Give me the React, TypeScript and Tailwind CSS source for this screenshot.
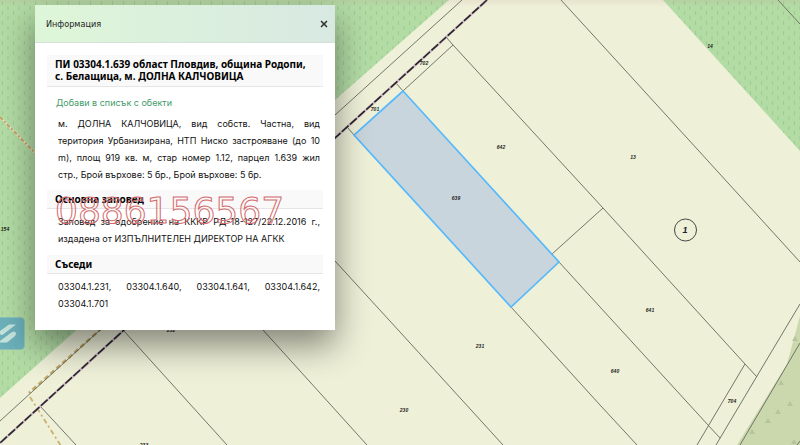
import React from "react";
import { X } from "lucide-react";

const labels = [
  { x: 710, y: 48, text: "14" },
  { x: 633, y: 159, text: "13" },
  { x: 424, y: 65, text: "702" },
  { x: 375, y: 111, text: "701" },
  { x: 501, y: 149, text: "642" },
  { x: 456, y: 200, text: "639" },
  { x: 650, y: 312, text: "641" },
  { x: 615, y: 373, text: "640" },
  { x: 480, y: 348, text: "231" },
  { x: 404, y: 412, text: "230" },
  { x: 732, y: 403, text: "704" },
  { x: 5, y: 231, text: "154" },
  { x: 171, y: 332, text: "232" },
  { x: 144, y: 447, text: "233" },
];

const trees = [
  [795, 339],
  [781, 383],
  [790, 404],
  [778, 412],
  [768, 421],
  [752, 432],
  [794, 442],
];

function CadastreMap() {
  return (
    <svg
      className="absolute inset-0 h-full w-full"
      viewBox="0 0 800 445"
      preserveAspectRatio="xMinYMin slice"
      aria-label="Кадастрална карта"
    >
      <defs>
        <pattern id="meadow" width="11" height="10" patternUnits="userSpaceOnUse">
          <rect width="11" height="10" fill="#b3dca5" />
          <path d="M2.5 1v4M8 6v4" stroke="#9fcb95" strokeWidth="1.1" />
        </pattern>
        <linearGradient id="topShade" x1="0" y1="0" x2="0" y2="1">
          <stop offset="0" stopColor="#c08080" stopOpacity="0.12" />
          <stop offset="1" stopColor="#c08080" stopOpacity="0" />
        </linearGradient>
      </defs>

      {/* land cover */}
      <rect width="800" height="445" fill="#eef0d8" />
      <path d="M0 0H449L335 100L0 398Z" fill="url(#meadow)" />
      <path d="M663 0H800V151Z" fill="url(#meadow)" />
      <path d="M800 316L787 364L737 445H800Z" fill="#cbd8ae" />
      {trees.map(([x, y]) => (
        <path key={x} d={`M${x - 3} ${y + 2}l3 -5l3 5z`} fill="#b5c59b" />
      ))}

      {/* paths */}
      <g fill="none">
        <path d="M0 117L36 154" stroke="#dde3c0" strokeWidth="2.5" />
        <path d="M0 117L36 154" stroke="#c5a058" strokeWidth="1.8" strokeDasharray="4 2 2 2" />
        <path d="M102 328L29 393" stroke="#c4aa68" strokeWidth="2.6" strokeDasharray="5 3" />
        <path d="M30 397L61 446" stroke="#ccb070" strokeWidth="1.8" strokeDasharray="5 3 2 3" />
      </g>

      {/* parcel borders */}
      <path
        d="M462 0L335 115L100 330L0 421M446 37L453 45L603 208L745 364L757 377M453 45L403 91L396 83M347 127L354 135M603 208L552 254M559 262L600 307L708 425L720 438M511 307L600 405L637 445M561 0L698 150L800 262M778 0L800 24M263 330L367 445M335 261L400 332L503 445M124 331L180 393L227 445M40 406L76 445M800 304L757 376L716 445M745 364L697 445M800 343L740 445M797 445L800 441"
        fill="none"
        stroke="#66695f"
        strokeWidth="0.9"
      />

      {/* settlement border */}
      <path d="M487 0L335 138L124 330L0 443" fill="none" stroke="#cdb9c4" strokeWidth="2.4" />
      <path
        d="M487 0L335 138L124 330L0 443"
        fill="none"
        stroke="#28242a"
        strokeWidth="1.6"
        strokeDasharray="9 2"
      />

      {/* selected parcel */}
      <path
        d="M403 91L559 262L511 307L354 135Z"
        fill="#c8d5dd"
        stroke="#58b9fa"
        strokeWidth="1.7"
      />

      <g
        fill="#222"
        fontFamily="'Liberation Sans', sans-serif"
        fontStyle="italic"
        fontWeight="700"
        fontSize="5"
        textAnchor="middle"
      >
        {labels.map((l) => (
          <text key={l.text} x={l.x} y={l.y}>
            {l.text}
          </text>
        ))}
      </g>
      <circle cx="685.5" cy="230" r="11" fill="none" stroke="#333" strokeWidth="0.9" />
      <text
        x="685"
        y="233"
        fill="#222"
        fontFamily="'Liberation Sans', sans-serif"
        fontStyle="italic"
        fontWeight="700"
        fontSize="9"
        textAnchor="middle"
      >
        1
      </text>

      {/* map provider badge */}
      <rect x="-9" y="317.5" width="33.5" height="32" rx="4" fill="#6cb0ba" stroke="#8cc4b5" />
      <path
        d="M0 331L9 324.500H16L3 334.500Q0 336 0 333ZM0 341L12 332Q15 330.500 16 333Q16.500 335 14 337L7 342.500H0Z"
        fill="#c5e3da"
      />
      <rect width="800" height="7" fill="url(#topShade)" />
    </svg>
  );
}

function SectionTitle({ children }: { children: React.ReactNode }) {
  return (
    <h3 className="border-b border-[#e6e6e6] bg-[#f9f9f9] px-2 py-[3px] font-['Noto_Sans',sans-serif] text-[10px] leading-3 font-bold text-black">
      {children}
    </h3>
  );
}

function InfoDialog() {
  return (
    <section
      aria-label="Информация"
      className="absolute top-[5px] left-[35px] w-[300px] bg-white font-[Inter,sans-serif] shadow-[0_15px_32px_rgba(0,0,0,0.45)]"
    >
      <header className="flex h-[38px] items-center justify-between border-b border-[#d5e0d8] bg-linear-to-r from-[#def6d8] to-[#d8e9e2] pr-[6px] pl-[11px]">
        <h2 className="font-['DejaVu_Sans_Condensed','DejaVu_Sans',sans-serif] text-[9px] leading-3 text-[#222]">
          Информация
        </h2>
        <button type="button" aria-label="Затвори" className="text-[#333]">
          <X size={10} strokeWidth={4} />
        </button>
      </header>

      <div className="px-3 pt-3 pb-[18px]">
        <h3 className="border-b border-[#e6e6e6] bg-[#f9f9f9] px-2 pt-[3px] pb-1 font-['Noto_Sans',sans-serif] text-[10px] leading-3 font-bold whitespace-nowrap text-black">
          ПИ 03304.1.639 област Пловдив, община Родопи,
          <br />
          с. Белащица, м. ДОЛНА КАЛЧОВИЦА
        </h3>
        <a href="#list" className="mt-2 block pl-[9px] text-[9px] leading-4 text-[#3f9a6a]">
          Добави в списък с обекти
        </a>
        <p className="mt-1 mb-[7px] pr-[3px] pl-[11px] text-justify text-[9px] leading-[17px] text-[#111]">
          м. ДОЛНА КАЛЧОВИЦА, вид собств. Частна, вид територия Урбанизирана, НТП Ниско
          застрояване (до 10 m), площ 919 кв. м, стар номер 1.12, парцел 1.639 жил{" "}
          <span className="whitespace-nowrap">стр., Брой</span> върхове: 5 бр., Брой върхове: 5 бр.
        </p>

        <SectionTitle>Основна заповед</SectionTitle>
        <p className="mt-1 mb-2 pr-[3px] pl-[11px] text-justify text-[9px] leading-[17px] text-[#111]">
          Заповед за одобрение на КККР РД-18-127/22.12.2016 г., издадена от ИЗПЪЛНИТЕЛЕН ДИРЕКТОР
          НА АГКК
        </p>

        <SectionTitle>Съседи</SectionTitle>
        <p className="mt-1 pr-[3px] pl-[11px] text-justify text-[9px] leading-[17px] text-[#111]">
          03304.1.231, 03304.1.640, 03304.1.641, 03304.1.642, 03304.1.701
        </p>
      </div>
    </section>
  );
}

export default function App() {
  return (
    <main className="relative min-h-screen overflow-hidden bg-[#eef0d8]">
      <CadastreMap />
      <InfoDialog />
      {/* watermark */}
      <div className="pointer-events-none absolute top-[191px] left-[55px] font-['DejaVu_Sans',sans-serif] text-[36px] leading-10 text-transparent [-webkit-text-stroke:1px_#d4696b]">
        0886156567
      </div>
    </main>
  );
}
